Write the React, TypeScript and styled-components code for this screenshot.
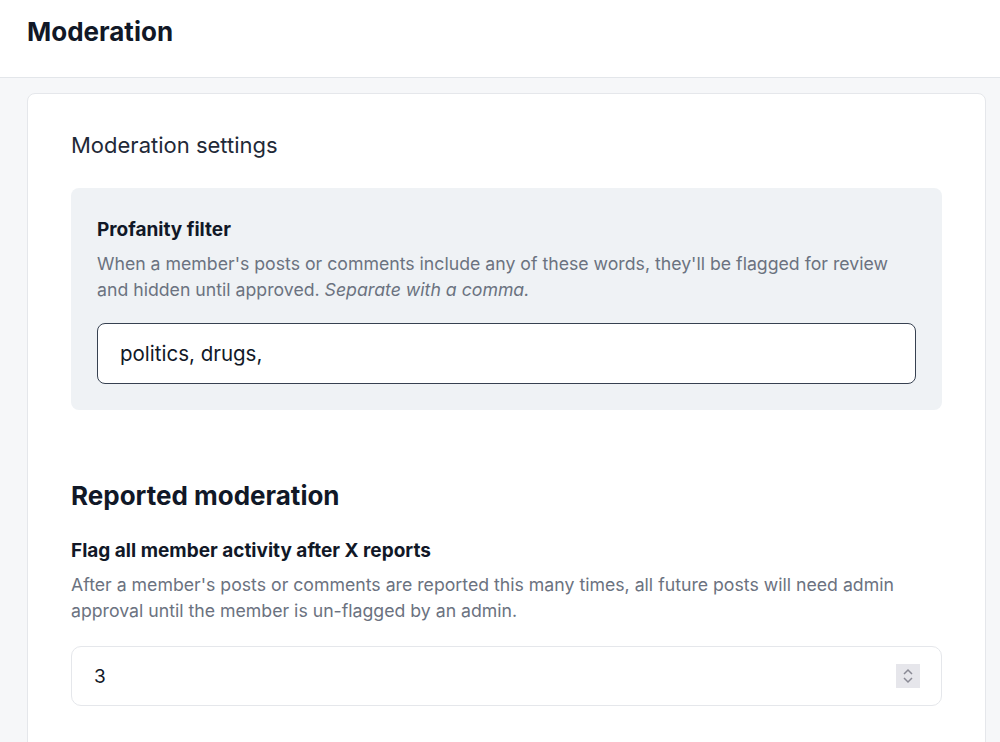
import React from 'react'
import styled, { createGlobalStyle } from 'styled-components'

const Global = createGlobalStyle`
    body {
        margin: 0;
        background: #f6f7f9;
        font-family: Inter, "Noto Sans", sans-serif;
        color: #1f2937;
    }
`

const Header = styled.header`
    height: 78px;
    background: white;
    border-bottom: 1px solid #e3e6ea;
    display: flex;
    align-items: center;
    padding: 0 27px 14px;
    box-sizing: border-box;
`

const Title = styled.h1`
    margin: 0;
    font-size: 26px;
    font-weight: 700;
    color: #111827;
`

const Page = styled.main`
    padding: 15px 14px 0 27px;
`

const Card = styled.section`
    background: white;
    border: 1px solid #e5e7eb;
    border-radius: 8px;
    padding: 38px 43px 60px;
`

const SectionTitle = styled.h2`
    margin: 0 0 30px;
    font-size: 22px;
    font-weight: 400;
    color: #1f2937;
`

const Panel = styled.div`
    background: #eff2f5;
    border-radius: 8px;
    padding: 30px 26px 26px;
`

const Label = styled.div`
    font-size: 19px;
    font-weight: 700;
    color: #111827;
    margin-bottom: 10px;
`

const Help = styled.p<{ $gap?: number }>`
    margin: 0 0 ${p => p.$gap ?? 20}px;
    font-size: 17.7px;
    line-height: 26px;
    color: #6b7280;
`

const TextInput = styled.div<{ $dark?: boolean }>`
    height: ${p => p.$dark ? '61px' : '60px'};
    box-sizing: border-box;
    border: 1px solid ${p => p.$dark ? '#374151' : '#e5e7eb'};
    border-radius: ${p => p.$dark ? '8px' : '10px'};
    background: white;
    display: flex;
    align-items: center;
    justify-content: space-between;
    padding: 0 21px 0 ${p => p.$dark ? '22px' : '22px'};
    font-size: ${p => p.$dark ? '20.5px' : '19px'};
    color: #111827;
`

const Heading = styled.h3`
    margin: 70px 0 28px;
    font-size: 26px;
    font-weight: 700;
    color: #111827;
`

const Spinner = styled.div`
    width: 24px;
    height: 24px;
    background: #e6e6eb;
    display: flex;
    align-items: center;
    justify-content: center;
`

const App = () => (
    <>
        <Global />
        <Header>
            <Title>Moderation</Title>
        </Header>
        <Page>
            <Card>
                <SectionTitle>Moderation settings</SectionTitle>
                <Panel>
                    <Label>Profanity filter</Label>
                    <Help>
                        When a member's posts or comments include any of these words, they'll be flagged for review and hidden until approved. <i>Separate with a comma.</i>
                    </Help>
                    <TextInput $dark>politics, drugs,</TextInput>
                </Panel>
                <Heading>Reported moderation</Heading>
                <Label>Flag all member activity after X reports</Label>
                <Help $gap={22}>
                    After a member's posts or comments are reported this many times, all future posts will need admin approval until the member is un-flagged by an admin.
                </Help>
                <TextInput>
                    3
                    <Spinner>
                        <svg width="12" height="18" viewBox="0 0 12 18" fill="none" stroke="#8a8a95" strokeWidth="1.5">
                            <path d="M2 7l4-4 4 4M2 11l4 4 4-4" />
                        </svg>
                    </Spinner>
                </TextInput>
            </Card>
        </Page>
    </>
)

export default App
